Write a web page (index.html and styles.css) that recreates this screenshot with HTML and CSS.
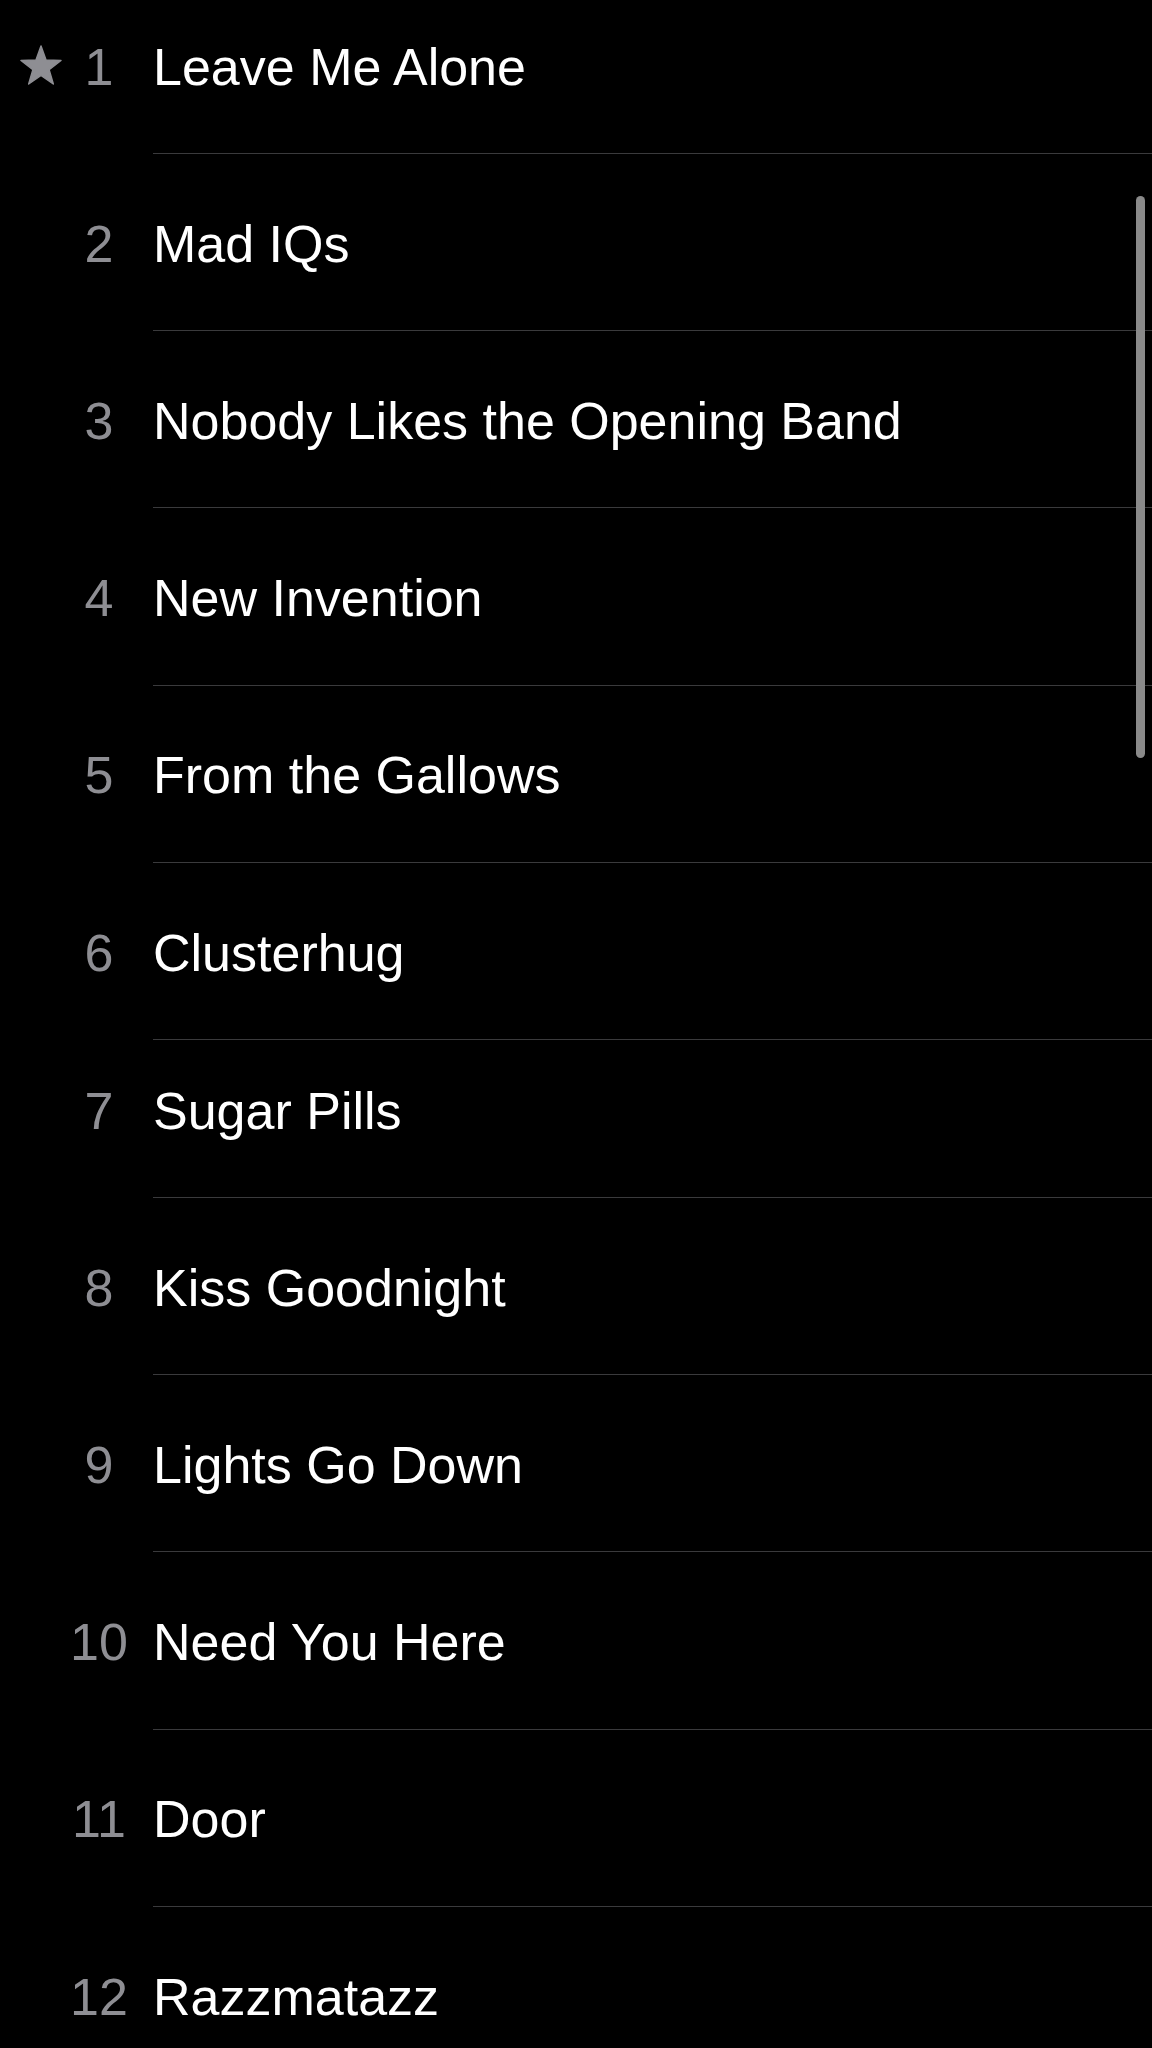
FILE: index.html
```html
<!DOCTYPE html>
<html lang="en">
<head>
<meta charset="utf-8">
<title>Tracks</title>
<link rel="stylesheet" href="styles.css">
</head>
<body>
<main class="screen">
  <ul class="tracks">
    <li class="row">
      <span class="lead">
        <span class="star-slot">
          <svg class="star" viewBox="0 0 44 40" width="44" height="40" aria-hidden="true">
            <polygon points="22,1 27,15.1 42,15.5 30.1,24.6 34.3,39 22,30.5 9.7,39 13.9,24.6 2,15.5 17,15.1" fill="#8e8e93" stroke="#8e8e93" stroke-width="1.5" stroke-linejoin="round"/>
          </svg>
        </span>
        <span class="num">1</span>
      </span>
      <span class="title">Leave Me Alone</span>
    </li>
    <li class="row"><span class="lead"><span class="star-slot"></span><span class="num">2</span></span><span class="title">Mad IQs</span></li>
    <li class="row"><span class="lead"><span class="star-slot"></span><span class="num">3</span></span><span class="title">Nobody Likes the Opening Band</span></li>
    <li class="row"><span class="lead"><span class="star-slot"></span><span class="num">4</span></span><span class="title">New Invention</span></li>
    <li class="row"><span class="lead"><span class="star-slot"></span><span class="num">5</span></span><span class="title">From the Gallows</span></li>
    <li class="row"><span class="lead"><span class="star-slot"></span><span class="num">6</span></span><span class="title">Clusterhug</span></li>
    <li class="row row-cut"><span class="lead"><span class="star-slot"></span><span class="num">7</span></span><span class="title">Sugar Pills</span></li>
    <li class="row"><span class="lead"><span class="star-slot"></span><span class="num">8</span></span><span class="title">Kiss Goodnight</span></li>
    <li class="row"><span class="lead"><span class="star-slot"></span><span class="num">9</span></span><span class="title">Lights Go Down</span></li>
    <li class="row"><span class="lead"><span class="star-slot"></span><span class="num">10</span></span><span class="title">Need You Here</span></li>
    <li class="row"><span class="lead"><span class="star-slot"></span><span class="num">11</span></span><span class="title">Door</span></li>
    <li class="row"><span class="lead"><span class="star-slot"></span><span class="num">12</span></span><span class="title">Razzmatazz</span></li>
  </ul>
  <div class="scroll-indicator"></div>
</main>
</body>
</html>
```

FILE: styles.css
```css
html, body {
  margin: 0;
  padding: 0;
  background: #000;
}

body {
  font-family: "Liberation Sans", Arial, sans-serif;
  color: #fff;
  overflow: hidden;
}

.screen {
  position: relative;
  width: 1152px;
  height: 2048px;
  overflow: hidden;
  background: #000;
}

.tracks {
  list-style: none;
  margin: -23.2px 0 0 0;
  padding: 0;
}

.row {
  box-sizing: border-box;
  display: flex;
  align-items: center;
  height: 177.2px;
  background-image: linear-gradient(#3a3a3c, #3a3a3c);
  background-repeat: no-repeat;
  background-position: left 153px bottom;
  background-size: calc(100% - 153px) 1px;
}

.row-cut {
  height: 158px;
  padding-bottom: 19px;
}

.lead {
  display: flex;
  align-items: center;
  flex: 0 0 153px;
  width: 153px;
}

.star-slot {
  display: flex;
  align-items: center;
  justify-content: center;
  flex: 0 0 44px;
  width: 44px;
  height: 40px;
  margin-left: 19px;
}

.star {
  display: block;
  width: 44px;
  height: 40px;
}

.num {
  flex: 0 0 72px;
  width: 72px;
  text-align: center;
  font-size: 52px;
  line-height: 1.2;
  color: #8e8e93;
  padding-top: 3px;
}

.title {
  flex: 1 1 auto;
  font-size: 52px;
  line-height: 1.2;
  color: #fff;
  white-space: nowrap;
  padding-top: 3px;
}

.scroll-indicator {
  position: absolute;
  top: 196px;
  right: 7px;
  width: 9px;
  height: 562px;
  border-radius: 5px;
  background: #8a8a8a;
}
```
